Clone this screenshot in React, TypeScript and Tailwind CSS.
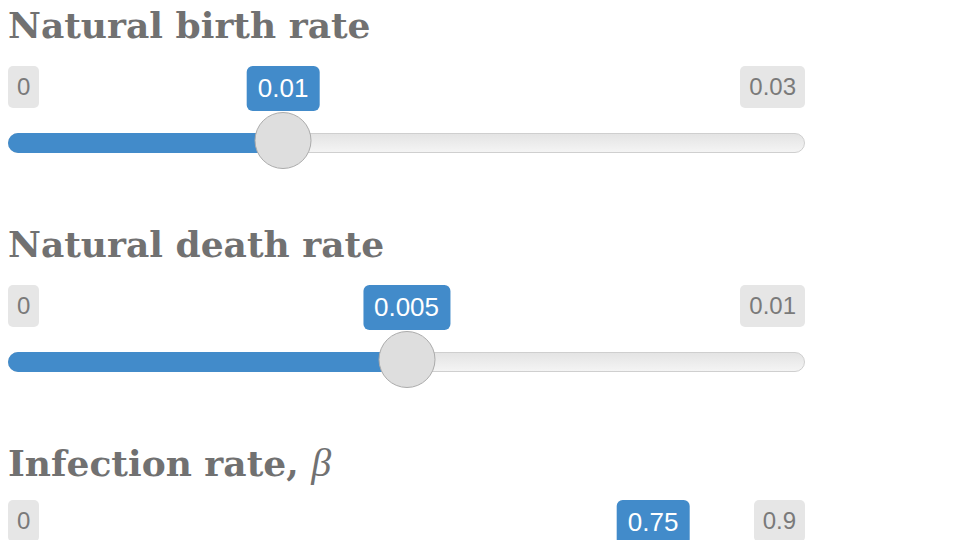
import React from "react";

type SliderProps = { min: number; max: number; value: number; minLabel: string; maxLabel: string; valueLabel: string };

const W = 797;
const D = 57;

function Slider({ min, max, value, minLabel, maxLabel, valueLabel }: SliderProps) {
  const pct = (value - min) / (max - min);
  const center = D / 2 + pct * (W - D);
  return (
    <div className="relative h-[104px] w-[797px]">
      <div className="absolute left-0 top-0 h-[42px] rounded-[5px] bg-[#e6e6e6] px-[9px] text-[24px] leading-[42px] text-[#7a7a7a]">
        {minLabel}
      </div>
      <div className="absolute right-0 top-0 h-[42px] rounded-[5px] bg-[#e6e6e6] px-[9px] text-[24px] leading-[42px] text-[#7a7a7a]">
        {maxLabel}
      </div>
      <div
        className="absolute top-0 h-[45px] -translate-x-1/2 rounded-[6px] bg-[#428bca] px-[11px] text-[26px] leading-[45px] text-white"
        style={{ left: center }}
      >
        {valueLabel}
      </div>
      <div className="absolute left-0 right-0 top-[67px] h-[20px] rounded-full border border-[#cfcfcf] bg-gradient-to-b from-[#e4e4e4] to-[#f4f4f4]" />
      <div className="absolute left-0 top-[67px] h-[20px] rounded-l-full bg-[#428bca]" style={{ width: center }} />
      <div
        className="absolute top-[46px] h-[57px] w-[57px] -translate-x-1/2 rounded-full border border-[#ababab] bg-[#dedede]"
        style={{ left: center }}
      />
    </div>
  );
}

const titleCls = "mt-[5px] h-[40px] text-[36px] font-bold leading-[40px] text-[#717171] whitespace-nowrap";

export default function App() {
  return (
    <div className="flex h-[540px] w-[960px] flex-col overflow-hidden bg-white pl-[8px] font-['Liberation_Sans',Arial,sans-serif]">
      <div className="flex h-[219px] shrink-0 flex-col">
        <div className={titleCls} style={{ fontFamily: "'DejaVu Serif', serif" }}>Natural birth rate</div>
        <div className="mt-[21px]">
          <Slider min={0} max={0.03} value={0.01} minLabel="0" maxLabel="0.03" valueLabel="0.01" />
        </div>
      </div>
      <div className="flex h-[219px] shrink-0 flex-col">
        <div className={titleCls} style={{ fontFamily: "'DejaVu Serif', serif" }}>Natural death rate</div>
        <div className="mt-[21px]">
          <Slider min={0} max={0.01} value={0.005} minLabel="0" maxLabel="0.01" valueLabel="0.005" />
        </div>
      </div>
      <div className="flex h-[219px] shrink-0 flex-col">
        <div className={titleCls} style={{ fontFamily: "'DejaVu Serif', serif" }}>
          Infection rate, <span className="text-[40px] font-normal italic" style={{ fontFamily: "'Liberation Serif', serif" }}>β</span>
        </div>
        <div className="mt-[17px]">
          <Slider min={0} max={0.9} value={0.75} minLabel="0" maxLabel="0.9" valueLabel="0.75" />
        </div>
      </div>
    </div>
  );
}
